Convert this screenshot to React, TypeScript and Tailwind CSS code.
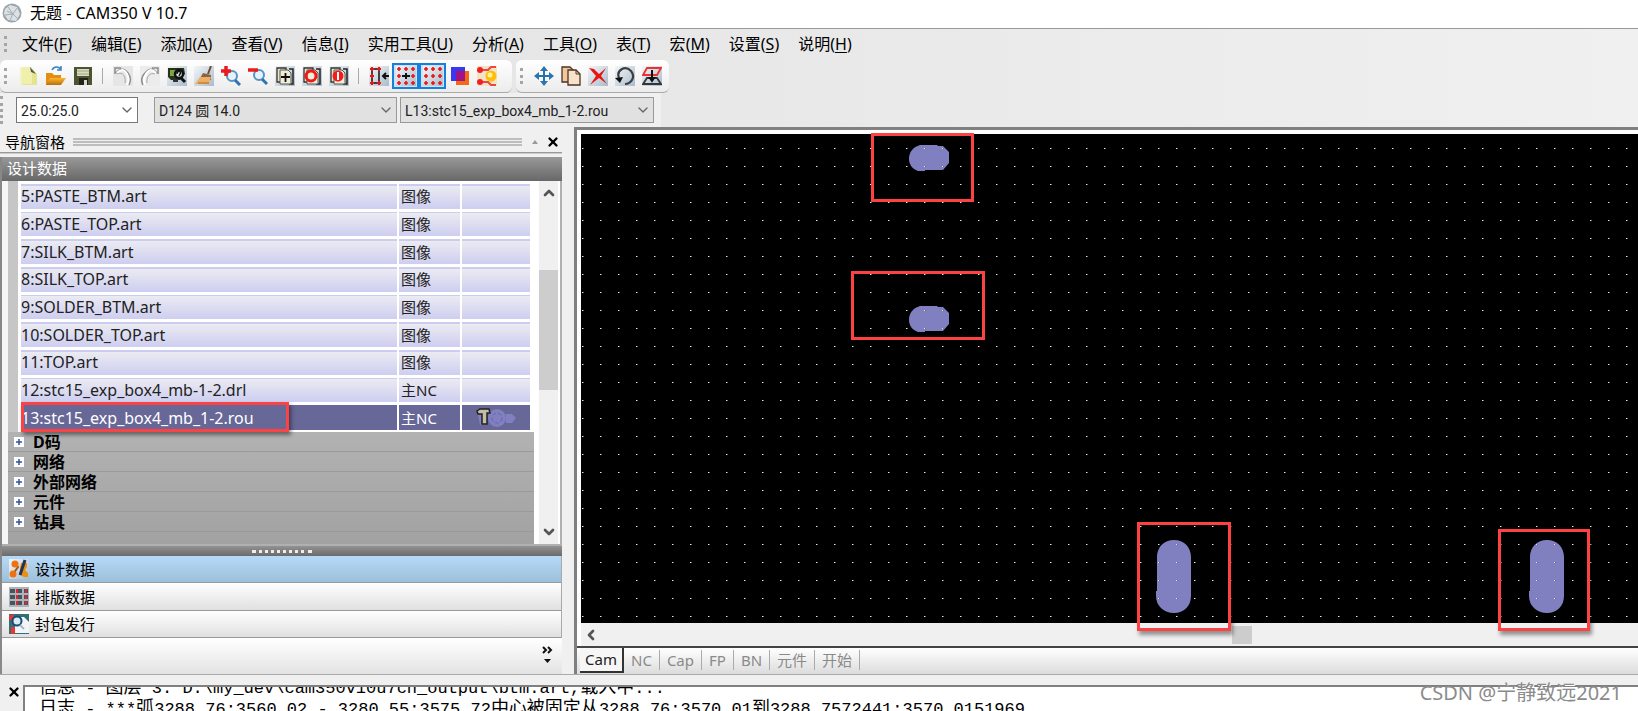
import type { ReactNode } from "react";
import { ChevronDown, ChevronLeft, ChevronUp, X } from "lucide-react";

const menus = [
  ["文件", "F"], ["编辑", "E"], ["添加", "A"], ["查看", "V"], ["信息", "I"], ["实用工具", "U"],
  ["分析", "A"], ["工具", "O"], ["表", "T"], ["宏", "M"], ["设置", "S"], ["说明", "H"],
];

const layers = [
  { name: "5:PASTE_BTM.art", type: "图像" },
  { name: "6:PASTE_TOP.art", type: "图像" },
  { name: "7:SILK_BTM.art", type: "图像" },
  { name: "8:SILK_TOP.art", type: "图像" },
  { name: "9:SOLDER_BTM.art", type: "图像" },
  { name: "10:SOLDER_TOP.art", type: "图像" },
  { name: "11:TOP.art", type: "图像" },
  { name: "12:stc15_exp_box4_mb-1-2.drl", type: "主NC" },
  { name: "13:stc15_exp_box4_mb_1-2.rou", type: "主NC", active: true },
];

const treeNodes = ["D码", "网络", "外部网络", "元件", "钻具"];
const tabs = ["NC", "Cap", "FP", "BN", "元件", "开始"];

const logLines = [
  "信息 - 图层 3: D:\\my_dev\\cam350v10u7ch_output\\btm.art,载入中...",
  "日志 - ***弧3288.76:3560.02 - 3280.55:3575.72中心被固定从3288.76:3570.01到3288.7572441:3570.0151969",
];

function Svg({ children }: { children: ReactNode }) {
  return (
    <svg viewBox="0 0 20 20" className="h-5 w-5 shrink-0" fill="none">
      <defs>
        <linearGradient id="steel" x1="0" y1="0" x2="1" y2="1">
          <stop offset="0" stopColor="#f4f6f8" />
          <stop offset="1" stopColor="#a9bccb" />
        </linearGradient>
        <linearGradient id="folder" x1="0" y1="0" x2="0" y2="1">
          <stop offset="0" stopColor="#ffb52e" />
          <stop offset="1" stopColor="#b96f0a" />
        </linearGradient>
      </defs>
      {children}
    </svg>
  );
}

function Pages({ children }: { children: ReactNode }) {
  return (
    <Svg>
      <rect width="20" height="20" fill="url(#steel)" />
      <path d="M2 2h9v14H2z" fill="#e9e6c8" stroke="#333" strokeWidth="1.3" />
      <path d="M14 3h4v15h-4" stroke="#222" strokeWidth="1.5" />
      <path d="M5 4h8l3 3v11H5z" fill="#f1eed6" stroke="#555" />
      {children}
    </Svg>
  );
}

function DotGrid() {
  return (
    <>
      <rect width="20" height="20" fill="url(#steel)" />
      {[3, 10, 17].map((y) =>
        [3, 10, 17].map((x) => (
          <path key={`${x}-${y}`} d={`M${x - 2} ${y}h4M${x} ${y - 2}v4`} stroke="#f01010" strokeWidth="1.6" />
        ))
      )}
    </>
  );
}

const fileTools = [
  {
    label: "新建",
    icon: (
      <Svg>
        <path d="M3 1h9l6 7v11H3z" fill="#e6e58f" />
        <path d="M1 1h12v17H1z" fill="#f3f2b4" opacity=".8" />
        <path d="M11 1l6 7-5-2z" fill="#555" />
      </Svg>
    ),
  },
  {
    label: "打开",
    icon: (
      <Svg>
        <path d="M0 7h6l2 2h7v4H5l-4 6H0z" fill="#e28e15" />
        <path d="M4 12h16l-5 7H0z" fill="url(#folder)" />
        <path d="M6 4c2-4 7-4 9 0M15 0v4h-4" stroke="#3b86c4" strokeWidth="1.6" />
      </Svg>
    ),
  },
  {
    label: "保存",
    icon: (
      <Svg>
        <path d="M1 1h18v18H1z" fill="#4d5430" />
        <path d="M4 3h12v7H4z" fill="#d9dcc0" />
        <path d="M4 5h12M4 8h12" stroke="#a2a888" />
        <path d="M6 12h9v7H6z" fill="#20241a" />
        <path d="M11 14h3v5h-3z" fill="#d5d8c8" />
      </Svg>
    ),
  },
];

const viewTools = [
  {
    label: "撤销",
    icon: (
      <Svg>
        <rect width="20" height="20" fill="#e6e6e6" />
        <path d="M2 8V2h6M3 7c5-6 9-4 12 0 3 4 3 8 1 12" stroke="#8c8c8c" strokeWidth="1.5" />
        <path d="M4 7c5-5 8-3 10 1s2 7 0 11" stroke="#fff" strokeWidth="2" />
        <path d="M4 8c6-3 9 3 8 9" stroke="#a8a8a8" />
      </Svg>
    ),
  },
  {
    label: "重做",
    icon: (
      <Svg>
        <rect width="20" height="20" fill="#ececec" />
        <path d="M18 8V2h-6M17 7C12 1 8 3 5 7c-4 4-4 8-2 12" stroke="#8c8c8c" strokeWidth="1.5" />
        <path d="M16 7C11 2 8 4 6 8s-3 7-1 11" stroke="#fff" strokeWidth="2" />
        <path d="M15 8c-5-2-9 3-8 9" stroke="#a8a8a8" />
      </Svg>
    ),
  },
  {
    label: "查询",
    icon: (
      <Svg>
        <rect width="20" height="20" fill="url(#steel)" />
        <path d="M1 2h16l1 6-5 6H4L1 11z" fill="#26321c" />
        <path d="M3 4h6v6H3z" fill="#7ea640" />
        <circle cx="12" cy="8" r="4" fill="#dce7e7" stroke="#111" strokeWidth="2.5" />
        <path d="M10 8c0-4 5-3 3 0l-1 2" stroke="#111" strokeWidth="1.5" />
        <path d="M14 12l4 4" stroke="#111" strokeWidth="3" />
        <path d="M6 13h5v3H6z" fill="#333" />
      </Svg>
    ),
  },
  {
    label: "重画",
    icon: (
      <Svg>
        <rect width="20" height="20" fill="url(#steel)" />
        <path d="M17 0l-3 8" stroke="#6b4c30" strokeWidth="2" />
        <path d="M9 7l8 2v5H5z" fill="#8a6444" />
        <path d="M6 11h11l-2 7H1z" fill="#efae66" />
        <path d="M4 17h11" stroke="#a86b2c" />
      </Svg>
    ),
  },
  {
    label: "放大",
    icon: (
      <Svg>
        <circle cx="11" cy="10" r="5" fill="#e4f3fb" stroke="#5793c3" strokeWidth="2" />
        <path d="M14 14l5 5" stroke="#2f73b3" strokeWidth="3" />
        <path d="M0 5h10M5 0v10" stroke="#e81c1c" strokeWidth="3.5" />
      </Svg>
    ),
  },
  {
    label: "缩小",
    icon: (
      <Svg>
        <circle cx="11" cy="9" r="5" fill="#e4f3fb" stroke="#5793c3" strokeWidth="2" />
        <path d="M14 13l5 5" stroke="#2f73b3" strokeWidth="3" />
        <path d="M0 4h10" stroke="#e81c1c" strokeWidth="3.5" />
      </Svg>
    ),
  },
  { label: "新图层", icon: <Pages><path d="M6 11h9M10.500 7v9" stroke="#111" strokeWidth="1.800" /></Pages> },
  { label: "全部图层", icon: <Pages><circle cx="9" cy="10" r="5" stroke="#f01818" strokeWidth="3" /></Pages> },
  { label: "单一图层", icon: <Pages><circle cx="9" cy="10" r="5.500" fill="#f21c1c" /><path d="M9 6v8" stroke="#fff" strokeWidth="2" /></Pages> },
];

const snapTools = [
  {
    label: "对齐",
    icon: (
      <Svg>
        <rect width="20" height="20" fill="url(#steel)" />
        <path d="M3 3h7v14H3z" stroke="#111" strokeWidth="1.5" />
        <path d="M1 3h4M8 3h4M1 17h4M8 17h4M1 10h4M3 1v4M10 1v4M3 15v4M10 15v4M3 8v4" stroke="#e51818" strokeWidth="2" />
        <path d="M14 10h6M17 7l-3 3 3 3" stroke="#111" strokeWidth="2" />
      </Svg>
    ),
  },
  { label: "捕捉栅格", on: true, icon: <Svg><DotGrid /><path d="M6 10h8M10 7v6" stroke="#111" strokeWidth="2" /></Svg> },
  { label: "显示栅格", on: true, icon: <Svg><DotGrid /></Svg> },
  {
    label: "颜色",
    icon: (
      <Svg>
        <path d="M6 5h13v14H6z" fill="#f36a13" />
        <path d="M1 1h14v14H1z" fill="#3838ef" />
        <path d="M6 5h9v10H6z" fill="#a21484" />
      </Svg>
    ),
  },
  {
    label: "高亮",
    icon: (
      <Svg>
        <rect width="20" height="20" fill="#f4e3c4" />
        <path d="M3 4h8l3-3h5M3 16h8l3 3h5" stroke="#f04444" strokeWidth="2" />
        <circle cx="3" cy="4" r="3" fill="#f12121" />
        <circle cx="3" cy="16" r="3" fill="#f12121" />
        <circle cx="14" cy="10" r="5.500" fill="#ffbd0a" />
        <circle cx="13" cy="9" r="2.500" fill="#fff59b" />
      </Svg>
    ),
  },
];

const editTools = [
  {
    label: "移动",
    icon: (
      <Svg>
        <path d="M10 3v14M3 10h14" stroke="#2870a9" strokeWidth="2" />
        <path d="M10 0l4 5H6zM10 20l4-5H6zM0 10l5-4v8zM20 10l-5-4v8z" fill="#2a75b1" />
      </Svg>
    ),
  },
  {
    label: "复制",
    icon: (
      <Svg>
        <path d="M1 1h8l3 3v12H1z" fill="#f3c79c" stroke="#4b3524" strokeWidth="1.3" />
        <path d="M7 4h8l4 4v11H7z" fill="#f8e3ca" stroke="#4b3524" strokeWidth="1.3" />
        <path d="M15 4v4h4" stroke="#4b3524" />
      </Svg>
    ),
  },
  {
    label: "删除",
    icon: (
      <Svg>
        <rect width="20" height="20" fill="url(#steel)" />
        <path d="M1 2l5 1 5 5 7-6-5 8 6 8-8-6-9 7 6-9z" fill="#e81414" />
      </Svg>
    ),
  },
  {
    label: "旋转",
    icon: (
      <Svg>
        <rect width="20" height="20" fill="url(#steel)" />
        <path d="M4 12C1 4 10-1 16 5c5 6 0 13-6 13" stroke="#3a4044" strokeWidth="2.200" />
        <path d="M0 12l8-1-3 6z" fill="#111" />
      </Svg>
    ),
  },
  {
    label: "镜像",
    icon: (
      <Svg>
        <rect width="20" height="20" fill="url(#steel)" />
        <path d="M5 2h14l-4 7H1z" stroke="#ed3030" strokeWidth="1.8" />
        <path d="M5 12h10l4 6H1z" stroke="#30363a" strokeWidth="1.8" />
        <path d="M10 4v10M8 12h4l-2 3z" fill="#111" stroke="#111" strokeWidth="2" />
      </Svg>
    ),
  },
];

type Tool = { label: string; icon: ReactNode; on?: boolean };

function ToolGroup({ tools }: { tools: Tool[] }) {
  return (
    <div className="flex">
      {tools.map((tool) => (
        <button
          key={tool.label}
          title={tool.label}
          aria-label={tool.label}
          className={
            tool.on
              ? "flex h-[26px] w-[27px] items-center justify-center border-2 border-[#1680dc] bg-[#cce4f7]"
              : "flex h-[26px] w-[27px] items-center justify-center"
          }
        >
          {tool.icon}
        </button>
      ))}
    </div>
  );
}

function Grip() {
  return <div className="mx-1 h-4 w-[3px] shrink-0 border-l-3 border-dotted border-[#a5a5a5]" />;
}

function Separator() {
  return <div className="mx-1.5 h-4 w-px bg-[#aaa]" />;
}

function Combo({ label, value, className }: { label: string; value: string; className: string }) {
  return (
    <div className={`relative h-[26px] border ${className}`}>
      <select
        aria-label={label}
        className="h-full w-full appearance-none bg-transparent pl-1 font-[Roboto,'Noto_Sans_CJK_SC',sans-serif] text-sm leading-5 text-[#222] outline-none"
      >
        <option>{value}</option>
      </select>
      <ChevronDown className="pointer-events-none absolute top-1 right-0.5 h-4 w-4 text-[#666]" strokeWidth={2} />
    </div>
  );
}

function NavPane() {
  return (
    <aside className="flex w-[562px] shrink-0 flex-col">
      <div className="flex h-[25px] items-center pt-1 pl-[5px]">
        <h2 className="mr-2 text-[15px] leading-5">导航窗格</h2>
        <div className="flex flex-1 flex-col gap-px">
          <div className="h-0.5 bg-[#bdbdbd]" />
          <div className="h-0.5 bg-[#bdbdbd]" />
          <div className="h-0.5 bg-[#bdbdbd]" />
        </div>
        <svg viewBox="0 0 6 4" className="ml-2.5 h-1 w-1.5"><path d="M0 4l3-4 3 4z" fill="#999" /></svg>
        <button aria-label="关闭" className="mr-0.5 ml-2"><X className="h-3.5 w-3.5" strokeWidth={4} /></button>
      </div>
      <div className="mb-[3px] h-0.5 border-t border-[#999] bg-[#ccc]" />
      <div className="flex min-h-0 flex-1 flex-col border-l-2 border-[#888]">
        <div className="h-6 bg-linear-to-b from-[#999] to-[#686868] pl-[5px] text-[15px] leading-[23px] text-white">设计数据</div>
        <div className="flex min-h-0 flex-1 border-r-2 border-b-2 border-[#b0b0b0] bg-white">
          <div className="flex min-w-0 flex-1 flex-col border-l-6 border-[#f6f6f6]">
            <div className="relative border-l-10 border-[#c6c6c6] bg-white pr-1 pl-[3px]">
              <table className="h-[251px] w-full table-fixed border-collapse text-base leading-5">
                <colgroup>
                  <col />
                  <col className="w-[63px]" />
                  <col className="w-[69px]" />
                </colgroup>
                <tbody>
                  {layers.map((layer) => (
                    <tr
                      key={layer.name}
                      className={
                        layer.active
                          ? "border-t-3 border-b-2 border-white bg-[#676798] text-white"
                          : "border-t-3 border-white bg-linear-to-b from-[#ebebf2] to-[#cbcbf0] text-[#222]"
                      }
                    >
                      <td className="p-0">{layer.name}</td>
                      <td className="border-x-2 border-white p-0 pl-0.5 text-[15px]">{layer.type}</td>
                      <td className="p-0">
                        {layer.active && (
                          <svg viewBox="0 0 42 20" className="ml-3.5 h-5 w-[42px]">
                            <path d="M2 7h8v10H4zM30 6h6l4 4-4 5h-6z" fill="#807fc0" />
                            <circle cx="21" cy="10" r="9" fill="#807fc0" />
                            <circle cx="21" cy="10" r="5" fill="none" stroke="#6866a5" strokeDasharray="4 2" />
                            <path d="M1 3l3-2h9l1 4h-3v11H6V6H2z" fill="#c5bda5" stroke="#222" strokeWidth="1.5" />
                          </svg>
                        )}
                      </td>
                    </tr>
                  ))}
                </tbody>
              </table>
              <div className="absolute bottom-0 left-[3px] h-[30px] w-[268px] border-3 border-[#fc4242] shadow-[2px_3px_4px_rgba(0,0,0,0.45)]" />
            </div>
            <ul className="flex-1 bg-linear-to-b from-[#b2b2b2] to-[#a2a2a2] text-base font-bold">
              {treeNodes.map((node) => (
                <li key={node} className="flex h-5 items-center border-b border-[#9a9a9a] pl-1.5 leading-5">
                  <button aria-label={`展开${node}`} className="mr-[9px] flex h-2.5 w-2.5 items-center justify-center bg-white">
                    <svg viewBox="0 0 8 8" className="h-2 w-2"><path d="M1 4h6M4 1v6" stroke="#3450a0" strokeWidth="1.5" /></svg>
                  </button>
                  {node}
                </li>
              ))}
            </ul>
          </div>
          <div className="mr-0.5 ml-[5px] flex w-[19px] flex-col items-center bg-[#f0f0f0] py-1 text-[#555]">
            <ChevronUp className="h-4 w-4" strokeWidth={4} />
            <div className="mt-[69px] h-[120px] w-full bg-[#cdcdcd]" />
            <ChevronDown className="mt-auto h-4 w-4" strokeWidth={4} />
          </div>
        </div>
        <div className="flex h-2.5 items-center justify-center bg-linear-to-b from-[#929292] to-[#6b6b6b]">
          <div className="w-[60px] border-t-3 border-dotted border-[#eee]" />
        </div>
        <nav className="border-r border-[#aaa] text-[15px] leading-5">
          <button className="flex h-[27px] w-full items-center gap-1.5 border-b border-[#999] bg-linear-to-b from-[#b5daf8] to-[#9dbfda] pl-[7px]">
            <Svg>
              <rect width="20" height="20" fill="url(#steel)" />
              <path d="M6 4l3 4-5 7" stroke="#a05a10" strokeWidth="2" />
              <path d="M12 4h6v4l-2 3 3 3v4h-4l-4-2V9z" fill="#e89012" />
              <circle cx="6" cy="5" r="3.500" fill="#ee7211" />
              <circle cx="4" cy="15" r="3.500" fill="#ee7211" />
              <path d="M16 1L11 16" stroke="#23315e" strokeWidth="3" />
            </Svg>
            设计数据
          </button>
          <button className="flex h-7 w-full items-center gap-1.5 border-b border-[#999] bg-linear-to-b from-white to-[#e0e0e0] pl-[7px]">
            <Svg>
              <rect width="20" height="20" fill="#a9b5ba" />
              {[2, 8, 14].map((y) => (
                <g key={y}>
                  <path d={`M1 ${y}h5v4H1zM8 ${y}h5v4H8zM15 ${y}h4v4h-4z`} fill="#48545a" />
                  <path d={`M7 ${y}h2v4H7zM16 ${y}h2v4h-2z`} fill="#df2437" />
                </g>
              ))}
            </Svg>
            排版数据
          </button>
          <button className="flex h-[27px] w-full items-center gap-1.5 border-b border-[#999] bg-linear-to-b from-white to-[#e0e0e0] pl-[7px]">
            <Svg>
              <rect width="20" height="20" fill="#346f75" />
              <path d="M0 1h5v5H0zM2 13h4v7H2z" fill="#e03737" />
              <path d="M6 3h9l5 5v11H6z" fill="#f1f5f8" />
              <circle cx="8" cy="7" r="4.500" fill="#dceaf2" stroke="#194c7c" strokeWidth="2" />
              <path d="M11 11l4 4" stroke="#a7b8c4" strokeWidth="2" />
            </Svg>
            封包发行
          </button>
        </nav>
        <div className="flex h-9 items-center justify-end bg-linear-to-b from-white to-[#e3e3e3] pr-[9px] pb-0.5">
          <button aria-label="配置按钮" className="flex flex-col items-center">
            <svg viewBox="0 0 11 18" className="h-[18px] w-[11px]">
              <path d="M1 1l3 3-3 3M6 1l3 3-3 3" fill="none" stroke="#111" strokeWidth="2" />
              <path d="M2 13h7l-3.500 4z" fill="#111" />
            </svg>
          </button>
        </div>
      </div>
    </aside>
  );
}

function Workspace() {
  return (
    <main className="ml-3 flex min-w-0 flex-1 flex-col border-t-3 border-l-3 border-[#808080]">
      <div className="relative flex min-h-0 flex-1 flex-col border-t-4 border-l-4 border-white">
        <svg className="min-h-0 w-full flex-1 bg-black">
          <defs>
            <pattern id="grid" width="18" height="18" patternUnits="userSpaceOnUse">
              <rect x="1" y="14" width="2" height="1" fill="#6c6c6c" />
              <rect x="1" y="14" width="1" height="1" fill="#e8e8e8" />
            </pattern>
          </defs>
          <g fill="#807fbf">
            <path d="M339 11h17l1 1h5l6 6v11l-6 7h-18v1h-7c-6-2-9-7-9-12 0-7 4-12 11-14z" />
            <path d="M339 172h17l1 1h5l6 6v11l-6 7h-18v1h-7c-6-2-9-7-9-12 0-7 4-12 11-14z" />
            <path d="M576 423c0-10 7-17 17-17s17 7 17 17v39c0 10-7 17-17 17s-18-7-18-17v-5h1z" />
            <path d="M949 423c0-10 7-17 17-17s17 7 17 17v39c0 10-7 17-17 17s-18-7-18-17v-5h1z" />
          </g>
          <rect width="100%" height="100%" fill="url(#grid)" />
        </svg>
        <div className="flex h-[23px] items-center bg-[#f0f0f0] pl-0.5">
          <ChevronLeft className="h-4 w-4 text-[#555]" strokeWidth={4} />
          <div className="ml-[633px] h-[18px] w-5 bg-[#cdcdcd]" />
        </div>
        {/* Slot markers */}
        <div className="absolute -top-px left-[290px] h-[69px] w-[103px] border-3 border-[#fc4242]" />
        <div className="absolute top-[137px] left-[270px] h-[69px] w-[134px] border-3 border-[#fc4242]" />
        <div className="absolute top-[388px] left-[556px] h-[109px] w-[94px] border-3 border-[#fc4242] shadow-[2px_4px_4px_rgba(0,0,0,0.4)]" />
        <div className="absolute top-[395px] left-[917px] h-[102px] w-[92px] border-3 border-[#fc4242] shadow-[2px_4px_4px_rgba(0,0,0,0.4)]" />
      </div>
      <div role="tablist" className="flex h-7 items-start border-t-2 border-[#444] bg-linear-to-b from-white to-[#dcdcdc] pl-[3px] text-[15px] leading-5 text-[#8a8a8a]">
        <button role="tab" aria-selected="true" className="h-[25px] w-11 border-r-2 border-b-2 border-[#333] bg-[#f6f6f6] pb-0.5 text-[#222]">Cam</button>
        {tabs.map((tab) => (
          <button key={tab} role="tab" aria-selected="false" className="mt-0.5 h-5 border-r border-[#aaa] px-[7px]">{tab}</button>
        ))}
      </div>
    </main>
  );
}

// Chinese runs are set one step larger than the monospaced text around them
function LogLine({ text }: { text: string }) {
  return (
    <p>
      {text.split(/([\u4e00-\u9fff]+)/).map((part, index) =>
        index % 2 ? <span key={index} className="text-lg leading-5">{part}</span> : part
      )}
    </p>
  );
}

export default function App() {
  return (
    <div className="relative flex h-screen flex-col overflow-hidden bg-[#f0f0f0] font-['Noto_Sans','Noto_Sans_CJK_SC',sans-serif] text-black">
      <header className="flex h-[29px] shrink-0 items-center gap-2 border-b border-[#999] bg-white pb-0.5 pl-0.5 text-base leading-5">
        <Svg>
          <circle cx="10" cy="10" r="9.500" fill="#9ba5ab" />
          <path d="M3 6l5-4 7 2 3 7-4 7-8-1-4-6z" fill="#dbe1e4" />
          <path d="M6 4l5 7 4-6M3 12l8-1 5 5M8 17l3-6M5 8l6 3" stroke="#a3adb3" />
        </Svg>
        <h1>无题 - CAM350 V 10.7</h1>
      </header>

      <div className="shrink-0 bg-linear-to-r from-[#e2e2e2] to-[#f0f0f0]">
        <nav className="flex h-[31px] items-center pb-0.5 text-base leading-5">
          <Grip />
          <div className="ml-[11px] flex gap-[19px]">
            {menus.map(([name, key]) => (
              <button key={name} className="whitespace-nowrap">
                {name}(<span className="underline underline-offset-2">{key}</span>)
              </button>
            ))}
          </div>
        </nav>
        <div className="flex gap-1">
          <div className="flex h-[33px] w-[512px] items-center rounded-md border-b border-[#aaa] bg-linear-to-b from-white to-[#ececec]">
            <Grip />
            <div className="ml-1 flex items-center">
              <ToolGroup tools={fileTools} />
              <Separator />
              <ToolGroup tools={viewTools} />
              <Separator />
              <ToolGroup tools={snapTools} />
            </div>
          </div>
          <div className="flex h-[33px] w-[153px] items-center rounded-md border-b border-[#aaa] bg-linear-to-b from-white to-[#ececec]">
            <Grip />
            <div className="ml-[3px]">
              <ToolGroup tools={editTools} />
            </div>
          </div>
        </div>
        <div className="flex h-[34px] w-[661px] items-center bg-[#f0f0f0]">
          <div className="mr-[13px] h-7 w-[3px] border-l-3 border-dotted border-[#a5a5a5]" />
          <Combo label="栅格" value="25.0:25.0" className="w-[122px] border-[#777] bg-white" />
          <Combo label="D码" value="D124 圆 14.0" className="ml-4 w-[243px] border-[#999] bg-[#e1e1e1]" />
          <Combo label="图层" value="L13:stc15_exp_box4_mb_1-2.rou" className="ml-[3px] w-[254px] border-[#999] bg-[#e1e1e1]" />
        </div>
      </div>

      <div className="flex min-h-0 flex-1">
        <NavPane />
        <Workspace />
      </div>

      <footer className="flex h-[37px] shrink-0 border-t border-[#aaa] pt-2.5">
        <button aria-label="关闭日志" className="flex h-3.5 w-[23px] items-center justify-center pl-1"><X className="h-3.5 w-3.5" strokeWidth={4} /></button>
        <div className="flex min-w-0 flex-1 flex-col justify-center overflow-hidden border-t-2 border-l-2 border-[#808080] bg-white pl-3.5 font-['Liberation_Mono','Noto_Sans_CJK_SC',monospace] text-[17px] leading-5 whitespace-pre">
          {logLines.map((line) => <LogLine key={line} text={line} />)}
        </div>
      </footer>
      <div className="absolute right-4 bottom-1 text-xl leading-7 text-[#8b8b8b] [text-shadow:1px_1px_0_#fff]">CSDN @宁静致远2021</div>
    </div>
  );
}
